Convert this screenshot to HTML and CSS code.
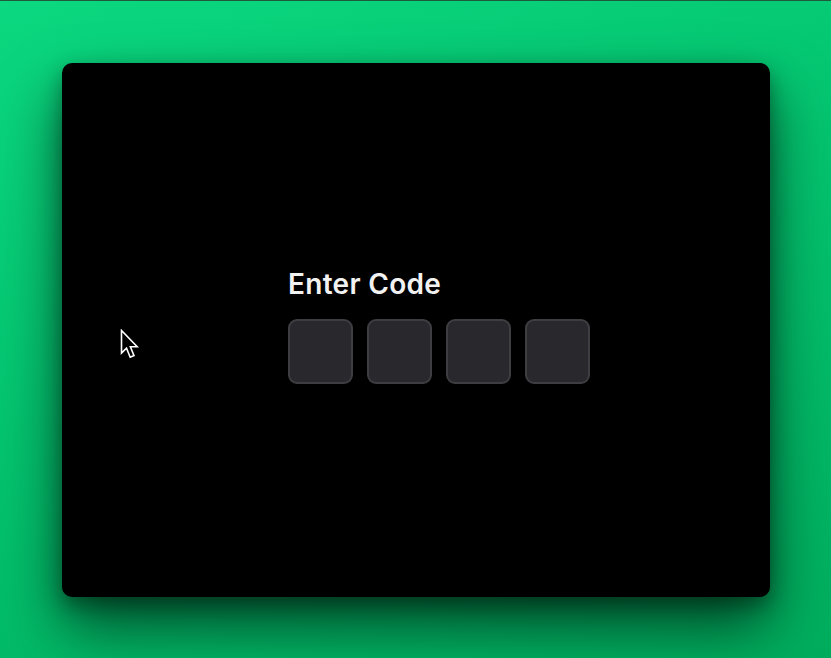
FILE: index.html
```html
<!DOCTYPE html>
<html>
<head>
<meta charset="utf-8">
<link rel="stylesheet" href="styles.css">
</head>
<body>
<div class="stage">
  <div class="window">
    <div class="panel">
      <h1 class="title">Enter Code</h1>
      <div class="code">
        <div class="cell"></div>
        <div class="cell"></div>
        <div class="cell"></div>
        <div class="cell"></div>
      </div>
    </div>
    <svg class="cursor" width="20" height="31" viewBox="0 0 20 31">
      <path d="M1.5 1.5 L1.5 24 L6.5 19.2 L10.2 28.2 L14 26.6 L10.4 17.8 L17.2 17.8 Z" fill="#000" stroke="#fff" stroke-width="1.6" stroke-linejoin="miter"/>
    </svg>
  </div>
</div>
</body>
</html>
```

FILE: styles.css
```css
html, body {
  margin: 0;
  padding: 0;
}
body {
  width: 831px;
  height: 658px;
  overflow: hidden;
  background: linear-gradient(160deg, #0bd880 0%, #04c46f 45%, #00ad5d 100%);
  font-family: Inter, "Noto Sans", sans-serif;
}
.stage {
  border-top: 1px solid #1f5a3a;
  padding: 62px 61px 0 62px;
}
.window {
  position: relative;
  width: 708px;
  height: 534px;
  background: #000;
  border-radius: 10px;
  box-shadow: 0 30px 60px rgba(0, 0, 0, 0.6), 0 8px 20px rgba(0, 0, 0, 0.35);
  box-sizing: border-box;
  padding: 204px 0 0 226px;
}
.panel {
  display: flex;
  flex-direction: column;
  gap: 18px;
}
.title {
  margin: 0;
  color: #f2f2f2;
  font-size: 28px;
  font-weight: 600;
  line-height: 34px;
  letter-spacing: 0.3px;
}
.code {
  display: flex;
  gap: 14px;
}
.cell {
  width: 65px;
  height: 65px;
  box-sizing: border-box;
  border: 2px solid #3d3d42;
  border-radius: 9px;
  background: #29292d;
}
.cursor {
  position: absolute;
  left: 58px;
  top: 266px;
}
```
